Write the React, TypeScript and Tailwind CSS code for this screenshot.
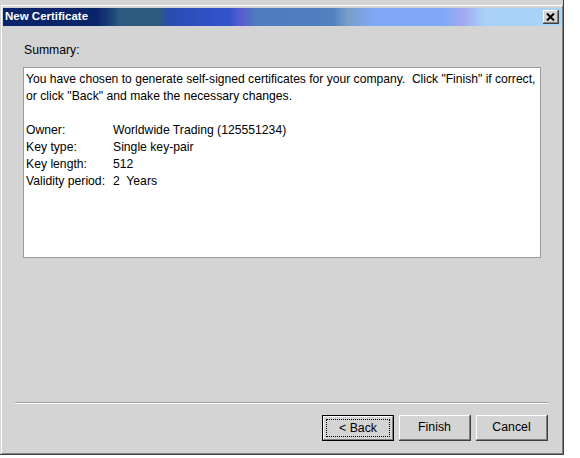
import React from "react";

function Btn({ label, def }: { label: string; def?: boolean }) {
  if (def) {
    return (
      <div className="w-[72px] h-[26px] border border-black">
        <div className="w-full h-full border-l border-t border-white border-r border-b border-r-[#808080] border-b-[#808080] p-[2px]">
          <div className="w-full h-full border border-dotted border-black flex items-center justify-center">
            <span className="text-[12.3px] leading-none text-black">{label}</span>
          </div>
        </div>
      </div>
    );
  }
  return (
    <div className="w-[72px] h-[26px] border-r border-b border-[#404040]">
      <div className="w-full h-full border-l border-t border-white border-r border-b border-r-[#808080] border-b-[#808080] flex items-center justify-center">
        <span className="text-[12.3px] leading-none text-black">{label}</span>
      </div>
    </div>
  );
}

export default function App() {
  const rows: [string, string][] = [
    ["Owner:", "Worldwide Trading (125551234)"],
    ["Key type:", "Single key-pair"],
    ["Key length:", "512"],
    ["Validity period:", "2  Years"],
  ];
  return (
    <div className="w-[580px] h-[458px] bg-white font-['Liberation_Sans',Arial,sans-serif]">
      <div className="w-[564px] h-[455px] bg-[#d4d4d4] pl-px pt-[5px] border-r border-b border-[#404040] flex flex-col">
        <div className="flex-1 border-l border-t border-white border-r border-b border-r-[#808080] border-b-[#808080] pt-[2px] px-px pb-px flex flex-col">
          {/* Title bar */}
          <div className="h-[18px] flex items-center justify-between pl-[2px] pr-[2px] bg-[linear-gradient(to_right,#0a246a_0px,#0a246a_94px,#1a3c7a_106px,#2b5a7e_116px,#2b5a7e_156px,#2a4cb0_166px,#2e50c4_200px,#3454cc_226px,#5a5cd0_238px,#4f7ac0_252px,#5080c0_330px,#78a0c8_345px,#80a8f8_372px,#80a8f8_440px,#a0a8f0_460px,#a8d2f8_482px,#a8d4f8_100%)]">
            <span className="text-white font-bold text-[11.5px] leading-none">New Certificate</span>
            <div className="w-[16px] h-[14px] border-r border-b border-[#404040]">
              <div className="w-full h-full bg-[#d4d4d4] border-l border-t border-white border-r border-b border-r-[#808080] border-b-[#808080] flex items-center justify-center">
                <svg width="9" height="8" viewBox="0 0 9 8">
                  <path d="M1 0.5 L8 7.5 M8 0.5 L1 7.5" stroke="black" strokeWidth="2" />
                </svg>
              </div>
            </div>
          </div>
          {/* Content */}
          <div className="flex-1 flex flex-col">
            <div className="pt-[16px] px-[20px]">
              <div className="h-[17px] leading-[17px] text-[12.2px] text-black pl-px">Summary:</div>
              <div className="mt-[8px] w-[518px] h-[191px] bg-white border border-[#9a9a9a] pl-[2px] pt-[3px] overflow-hidden text-[12.2px] leading-[17px] text-black whitespace-pre">
                <div className="text-[12.1px]">You have chosen to generate self-signed certificates for your company.  Click "Finish" if correct,</div>
                <div>or click "Back" and make the necessary changes.</div>
                <div className="h-[17px]" />
                <div className="grid grid-cols-[87px_1fr]">
                  {rows.map(([k, v]) => (
                    <React.Fragment key={k}>
                      <div>{k}</div>
                      <div>{v}</div>
                    </React.Fragment>
                  ))}
                </div>
              </div>
            </div>
            <div className="flex-1" />
            <div className="mx-[12px] border-t border-[#a0a0a0] border-b border-b-white" />
            <div className="flex justify-end gap-[5px] pr-[13px] mt-[11px] mb-[11px]">
              <Btn label="< Back" def />
              <Btn label="Finish" />
              <Btn label="Cancel" />
            </div>
          </div>
        </div>
      </div>
    </div>
  );
}
